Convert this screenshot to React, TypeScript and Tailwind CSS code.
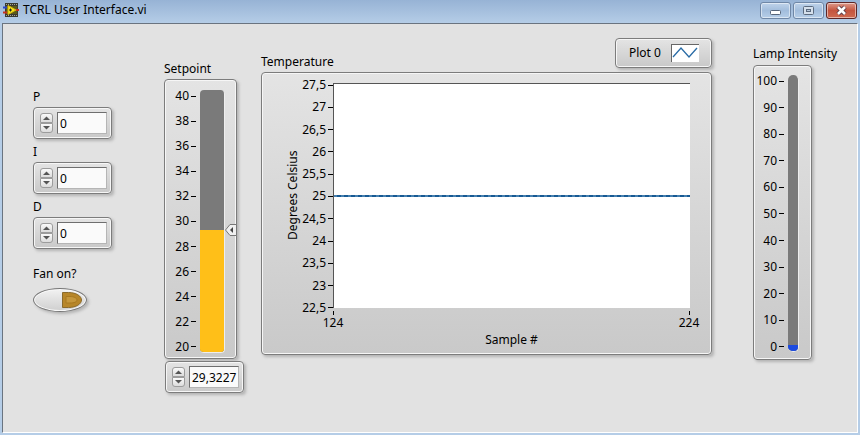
import { useId, useState } from "react";
import type { ReactNode } from "react";

const PANEL =
  "rounded-[4px] border border-[#7c7c7c] bg-linear-to-b from-[#e4e4e4] to-[#c9c9c9] shadow-[inset_0_0_0_1px_#f6f6f6,2px_2px_3px_#b4b4b4]";

const format = (value: number) => String(value).replace(".", ",");

function AppIcon() {
  return (
    <svg width="16" height="16" viewBox="0 0 16 16" aria-hidden="true" className="shrink-0">
      <rect x="2" y="1" width="13" height="14" fill="#3a3a30" />
      <path d="M3 2.500h11M3 13.500h11" stroke="#a5a594" strokeDasharray="1 1" />
      <rect x="3" y="4" width="11" height="8" fill="#5c5a18" />
      <path d="M5 3.500 13 8 5 12.500z" fill="#f6e51c" stroke="#d8b90c" />
      <path d="M6 8h3M7.500 6.500v3" stroke="#222" />
      <path d="M0 5.500h4" stroke="#2b44c8" strokeWidth="2" />
      <path d="M0 10.500h4" stroke="#c8321e" strokeWidth="2" />
      <path d="M13 8h3" stroke="#c8321e" strokeWidth="2" />
    </svg>
  );
}

function CaptionButton({ label, close, children }: { label: string; close?: boolean; children: ReactNode }) {
  return (
    <button
      type="button"
      aria-label={label}
      className={
        "flex h-[17px] w-[31px] items-center justify-center rounded-[3px] border shadow-[inset_0_0_0_1px_#ffffff80] " +
        (close
          ? "border-[#5c2626] bg-linear-to-b from-[#dd9a8c] via-[#c4543e] via-50% to-[#cf6a50]"
          : "border-[#6f87a6] bg-linear-to-b from-[#bfd3ea] via-[#a2bddc] via-50% to-[#b6cee8]")
      }
    >
      {children}
    </button>
  );
}

function TitleBar() {
  return (
    <header className="flex h-[23px] items-start bg-linear-to-b from-[#97b3d5] to-[#b5cde7] pr-[3px] pl-[3px]">
      <div className="flex h-5 flex-1 items-center gap-1">
        <AppIcon />
        <h1 className="text-[12px] leading-5">TCRL User Interface.vi</h1>
      </div>
      <div className="flex gap-[2px] pt-[2px]">
        <CaptionButton label="Minimize">
          <svg width="13" height="11" viewBox="0 0 13 11">
            <rect x="1.500" y="5.500" width="10" height="4" rx="1" fill="#fff" stroke="#56657a" />
          </svg>
        </CaptionButton>
        <CaptionButton label="Maximize">
          <svg width="13" height="11" viewBox="0 0 13 11">
            <rect x="1.500" y="1.500" width="10" height="8" rx="1" fill="#d5e0ec" stroke="#5b6a7e" />
            <rect x="4.500" y="4.500" width="4" height="2" fill="#b5c6da" stroke="#5b6a7e" />
          </svg>
        </CaptionButton>
        <CaptionButton label="Close" close>
          <svg width="13" height="11" viewBox="0 0 13 11">
            <path d="m3 2 7 7M10 2 3 9" stroke="#5a3a44" strokeWidth="4.500" />
            <path d="m3 2 7 7M10 2 3 9" stroke="#fff" strokeWidth="2.500" />
          </svg>
        </CaptionButton>
      </div>
    </header>
  );
}

function SpinArrows({ onStep, name }: { onStep: (delta: number) => void; name: string }) {
  const button = "flex h-[10px] w-[13px] items-center justify-center border border-[#9c9c9c] bg-linear-to-b from-[#fafafa] to-[#dcdcdc]";
  return (
    <div className="flex flex-col">
      <button type="button" aria-label={`Increase ${name}`} className={`${button} rounded-t-[3px]`} onClick={() => onStep(1)}>
        <svg width="7" height="4" viewBox="0 0 7 4">
          <path d="M0 4 3.500 .500 7 4z" fill="#555" />
        </svg>
      </button>
      <button type="button" aria-label={`Decrease ${name}`} className={`${button} rounded-b-[3px]`} onClick={() => onStep(-1)}>
        <svg width="7" height="4" viewBox="0 0 7 4">
          <path d="M0 0 3.500 3.500 7 0z" fill="#555" />
        </svg>
      </button>
    </div>
  );
}

function NumberBox({
  id,
  name,
  value,
  onChange,
}: {
  id: string;
  name: string;
  value: number;
  onChange: (value: number) => void;
}) {
  return (
    <div className={`${PANEL} flex h-8 w-[79px] items-center gap-1 pl-[6px]`}>
      <SpinArrows name={name} onStep={(delta) => onChange(value + delta)} />
      <input
        id={id}
        type="text"
        inputMode="decimal"
        aria-label={name}
        value={format(value)}
        onChange={(event) => {
          const next = Number(event.target.value.replace(",", "."));
          if (!Number.isNaN(next)) onChange(next);
        }}
        className="h-[22px] w-[50px] border border-t-[#6e6e6e] border-r-[#b5b5b5] border-b-[#b5b5b5] border-l-[#6e6e6e] bg-[#fafafa] pl-[2px] text-[12px] leading-4 outline-none"
      />
    </div>
  );
}

function GainControl({ name }: { name: string }) {
  const id = useId();
  const [value, setValue] = useState(0);
  return (
    <div className="flex flex-col gap-[2px]">
      <label htmlFor={id}>{name}</label>
      <NumberBox id={id} name={name} value={value} onChange={setValue} />
    </div>
  );
}

function FanSwitch() {
  const id = useId();
  const [on, setOn] = useState(false);
  return (
    <div className="flex flex-col items-start gap-[6px] pt-3">
      <label htmlFor={id}>Fan on?</label>
      <button
        id={id}
        type="button"
        aria-pressed={on}
        onClick={() => setOn(!on)}
        className="flex h-6 w-[54px] items-center justify-end rounded-[50%] border border-[#777] bg-linear-to-b from-[#f2f2f2] to-[#cfcfcf] pr-1 shadow-[inset_0_0_0_1px_#f8f8f8,2px_2px_3px_#b4b4b4]"
      >
        <svg width="20" height="16" viewBox="0 0 20 16">
          <path d="M.5 .500h6C14 .500 19.500 4 19.500 8S14 15.500 6.500 15.500h-6z" fill={on ? "#ffc21a" : "#b78629"} stroke="#8a6a2c" />
          <path d="M4 4.500h4c4 0 7 1.500 7 3.500s-3 3-7 3H4z" fill="#c5973c" stroke="#a87820" />
        </svg>
      </button>
    </div>
  );
}

function Scale({ labels, tick }: { labels: string[]; tick: string }) {
  return (
    <ul className="flex flex-1 flex-col justify-between">
      {labels.map((label) => (
        <li key={label} className="flex h-4 items-center justify-end gap-[2px]">
          <span>{label}</span>
          <span className={`h-px bg-black ${tick}`} />
        </li>
      ))}
    </ul>
  );
}

const SETPOINT_LABELS = ["40", "38", "36", "34", "32", "30", "28", "26", "24", "22", "20"];
const LAMP_LABELS = ["100", "90", "80", "70", "60", "50", "40", "30", "20", "10", "0"];
const TEMPERATURE_LABELS = ["27,5", "27", "26,5", "26", "25,5", "25", "24,5", "24", "23,5", "23", "22,5"];

function Setpoint() {
  const id = useId();
  const [value, setValue] = useState(29.3227);
  const level = 2 + ((value - 20) / 20) * 96;
  return (
    <section className="flex w-20 shrink-0 flex-col pt-[37px]">
      <label htmlFor={id}>Setpoint</label>
      <div className={`${PANEL} mt-[2px] flex h-[280px] w-[73px] gap-1 pt-[10px] pr-[11px] pb-[5px]`}>
        <div className="-mt-[2px] -mb-[2px] flex flex-1">
          <Scale labels={SETPOINT_LABELS} tick="w-[5px]" />
        </div>
        <div className="relative w-[25px]">
          <div className="flex h-full flex-col justify-end overflow-hidden rounded-[4px] border-r border-b border-[#eeeeee] bg-[#7a7a7a]">
            <div className="bg-[#ffbf18]" style={{ height: `${level}%` }} />
          </div>
          <svg
            width="12"
            height="13"
            viewBox="0 0 12 13"
            className="absolute left-full translate-y-1/2"
            style={{ bottom: `${level}%` }}
            aria-hidden="true"
          >
            <path d="M.5 6.500 5 1h6.500v11H5z" fill="#f0f0f0" stroke="#777" />
            <path d="M5 6.500 8 3.500v6z" fill="#444" />
          </svg>
          <input
            id={id}
            type="range"
            min={20}
            max={40}
            step="any"
            value={value}
            onChange={(event) => setValue(Math.round(Number(event.target.value) * 10000) / 10000)}
            className="absolute inset-0 h-full w-9 cursor-pointer opacity-0 [direction:rtl] [writing-mode:vertical-lr]"
          />
        </div>
      </div>
      <div className="mt-[2px] pl-px">
        <NumberBox id={`${id}-value`} name="Setpoint value" value={value} onChange={setValue} />
      </div>
    </section>
  );
}

function Temperature() {
  return (
    <section className="min-w-0 flex-1 pt-[14px]">
      <div className="flex h-[34px] items-start justify-between">
        <h2 className="pt-4">Temperature</h2>
        <div className={`${PANEL} flex h-[30px] w-[97px] items-center justify-between pr-3 pl-[13px]`}>
          <span>Plot 0</span>
          <svg width="28" height="18" viewBox="0 0 28 18" aria-hidden="true">
            <rect width="28" height="18" fill="#fff" />
            <path d="M0 .500h28M.5 0v18" stroke="#666" />
            <path d="m2 13 8-9 8 9 8-9" fill="none" stroke="#2a6ca6" strokeWidth="1.300" />
          </svg>
        </div>
      </div>
      <figure className={`${PANEL} flex flex-col pt-[10px] pr-[21px] pb-[6px] pl-[23px]`}>
        <div className="flex h-[225px]">
          <span className="w-4 rotate-180 text-center [writing-mode:vertical-rl]">Degrees Celsius</span>
          <div className="-mt-[6px] -mb-2 flex w-8">
            <Scale labels={TEMPERATURE_LABELS} tick="w-[5px]" />
          </div>
          <div className="flex flex-1 items-center border-t border-l border-[#555] bg-white">
            <svg width="100%" height="2" aria-hidden="true">
              <path d="M0 0h2000v2H0z" fill="#175a94" />
              <path d="M0 1h2000" stroke="#6f9fc6" strokeWidth="2" strokeDasharray="3 4" opacity=".55" />
            </svg>
          </div>
        </div>
        <div className="mr-[-11px] ml-9 flex justify-between pt-[3px]">
          {["124", "224"].map((label) => (
            <div key={label} className="flex w-6 flex-col items-center">
              <span className="h-1 w-px bg-black" />
              <span>{label}</span>
            </div>
          ))}
        </div>
        <figcaption className="ml-12 pt-px text-center">Sample #</figcaption>
      </figure>
    </section>
  );
}

function LampIntensity() {
  return (
    <section className="w-[79px] shrink-0 pt-[22px]">
      <h2 className="whitespace-nowrap">Lamp Intensity</h2>
      <div className={`${PANEL} mt-[3px] flex h-[295px] w-[59px] gap-1 pt-[9px] pr-3 pb-[7px]`}>
        <div className="-mt-[2px] -mb-[3px] flex flex-1">
          <Scale labels={LAMP_LABELS} tick="w-[5px]" />
        </div>
        <div
          role="meter"
          aria-label="Lamp Intensity"
          aria-valuemin={0}
          aria-valuemax={100}
          aria-valuenow={0}
          className="flex w-[11px] flex-col justify-end overflow-hidden rounded-[5px] border-r border-b border-[#eeeeee] bg-[#7a7a7a]"
        >
          <div className="h-[6px] bg-[#1c4be0]" />
        </div>
      </div>
    </section>
  );
}

export default function App() {
  return (
    <div className="flex min-h-screen flex-col bg-[#b5cde7] font-['Noto_Sans','Open_Sans',sans-serif] text-[12px] leading-4 text-black">
      <TitleBar />
      <main className="mr-[2px] mb-[2px] ml-[2px] flex flex-1 items-start border-t border-r border-b border-l border-t-[#6a7480] border-r-white border-b-white border-l-[#6a7480] bg-[#e2e2e2] pr-[25px] pl-[30px]">
        <div className="mr-[52px] flex w-[79px] shrink-0 flex-col gap-[5px] pt-[65px]">
          <GainControl name="P" />
          <GainControl name="I" />
          <GainControl name="D" />
          <FanSwitch />
        </div>
        <Setpoint />
        <div className="mr-[41px] ml-[17px] flex min-w-0 flex-1">
          <Temperature />
        </div>
        <LampIntensity />
      </main>
    </div>
  );
}
